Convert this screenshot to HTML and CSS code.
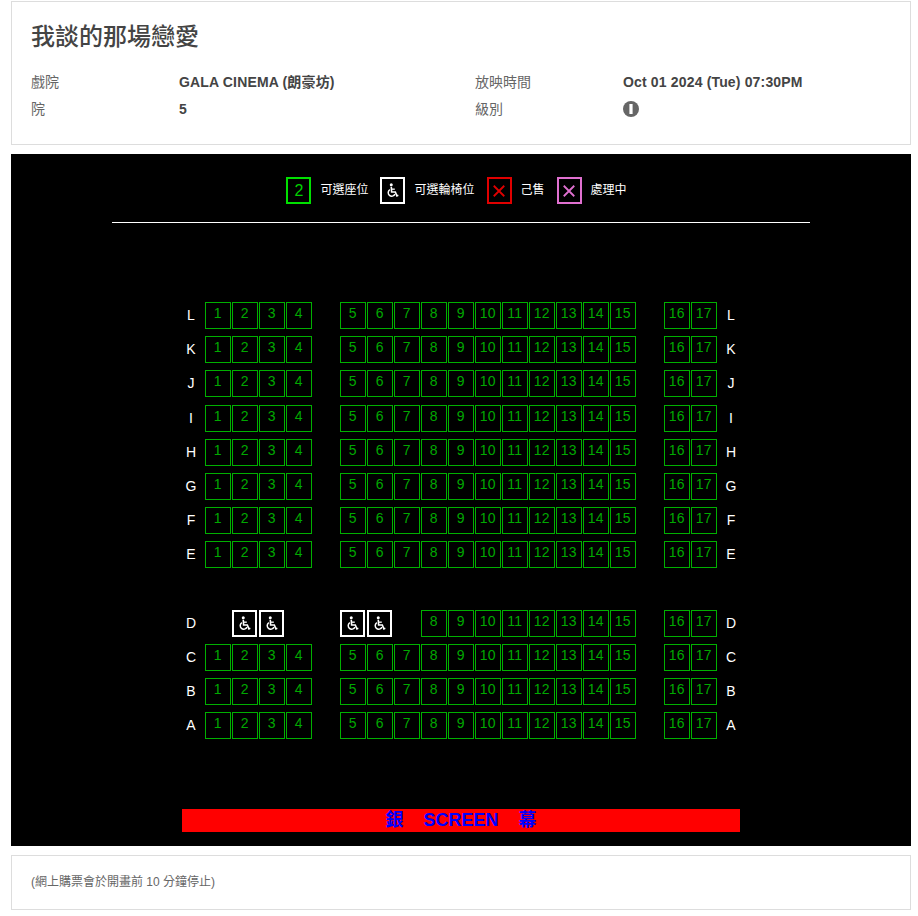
FILE: index.html
```html
<!DOCTYPE html>
<html lang="zh-Hant">
<head>
<meta charset="utf-8">
<title>我談的那場戀愛</title>
<link rel="stylesheet" href="styles.css">
</head>
<body>
<svg class="defs" width="0" height="0" aria-hidden="true"><symbol id="wc" viewBox="0 0 14 17"><circle cx="5.6" cy="1.9" r="1.7" fill="currentColor"/><path d="M5.6 4.2 6 10.2H10.2L12 14.6 13.6 14" fill="none" stroke="currentColor" stroke-width="1.8"/><path d="M6 7H9.6" fill="none" stroke="currentColor" stroke-width="1.5"/><path d="M4 7.6A4 4 0 1 0 9.8 12.6" fill="none" stroke="currentColor" stroke-width="1.7"/></symbol></svg>
<main class="page">
<section class="panel info">
<h1 class="title">我談的那場戀愛</h1>
<div class="facts">
<span class="key">戲院</span><b class="val">GALA CINEMA (朗豪坊)</b><span class="key">放映時間</span><b class="val">Oct 01 2024 (Tue) 07:30PM</b>
<span class="key">院</span><b class="val">5</b><span class="key">級別</span><span class="val"><svg class="rating" viewBox="0 0 16 16" role="img" aria-label="I"><circle cx="8" cy="8" r="8"/><rect x="6.4" y="3" width="3.2" height="10"/></svg></span>
</div>
</section>
<section class="hall">
<div class="legend">
<span class="lbox lgreen">2</span><span class="ltext">可選座位</span>
<span class="lbox lwhite"><svg class="wc"><use href="#wc"/></svg></span><span class="ltext">可選輪椅位</span>
<span class="lbox lred"><svg class="x" viewBox="0 0 16 16"><path d="M1 1 15 15M15 1 1 15"/></svg></span><span class="ltext">己售</span>
<span class="lbox lpink"><svg class="x" viewBox="0 0 16 16"><path d="M1 1 15 15M15 1 1 15"/></svg></span><span class="ltext">處理中</span>
</div>
<hr class="rule">
<div class="map">
<div class="row"><span class="rl">L</span><a>1</a><a>2</a><a>3</a><a>4</a><i></i><a>5</a><a>6</a><a>7</a><a>8</a><a>9</a><a>10</a><a>11</a><a>12</a><a>13</a><a>14</a><a>15</a><i></i><a>16</a><a>17</a><span class="rl">L</span></div>
<div class="row"><span class="rl">K</span><a>1</a><a>2</a><a>3</a><a>4</a><i></i><a>5</a><a>6</a><a>7</a><a>8</a><a>9</a><a>10</a><a>11</a><a>12</a><a>13</a><a>14</a><a>15</a><i></i><a>16</a><a>17</a><span class="rl">K</span></div>
<div class="row"><span class="rl">J</span><a>1</a><a>2</a><a>3</a><a>4</a><i></i><a>5</a><a>6</a><a>7</a><a>8</a><a>9</a><a>10</a><a>11</a><a>12</a><a>13</a><a>14</a><a>15</a><i></i><a>16</a><a>17</a><span class="rl">J</span></div>
<div class="row"><span class="rl">I</span><a>1</a><a>2</a><a>3</a><a>4</a><i></i><a>5</a><a>6</a><a>7</a><a>8</a><a>9</a><a>10</a><a>11</a><a>12</a><a>13</a><a>14</a><a>15</a><i></i><a>16</a><a>17</a><span class="rl">I</span></div>
<div class="row"><span class="rl">H</span><a>1</a><a>2</a><a>3</a><a>4</a><i></i><a>5</a><a>6</a><a>7</a><a>8</a><a>9</a><a>10</a><a>11</a><a>12</a><a>13</a><a>14</a><a>15</a><i></i><a>16</a><a>17</a><span class="rl">H</span></div>
<div class="row"><span class="rl">G</span><a>1</a><a>2</a><a>3</a><a>4</a><i></i><a>5</a><a>6</a><a>7</a><a>8</a><a>9</a><a>10</a><a>11</a><a>12</a><a>13</a><a>14</a><a>15</a><i></i><a>16</a><a>17</a><span class="rl">G</span></div>
<div class="row"><span class="rl">F</span><a>1</a><a>2</a><a>3</a><a>4</a><i></i><a>5</a><a>6</a><a>7</a><a>8</a><a>9</a><a>10</a><a>11</a><a>12</a><a>13</a><a>14</a><a>15</a><i></i><a>16</a><a>17</a><span class="rl">F</span></div>
<div class="row"><span class="rl">E</span><a>1</a><a>2</a><a>3</a><a>4</a><i></i><a>5</a><a>6</a><a>7</a><a>8</a><a>9</a><a>10</a><a>11</a><a>12</a><a>13</a><a>14</a><a>15</a><i></i><a>16</a><a>17</a><span class="rl">E</span></div>
<div class="row"></div>
<div class="row"><span class="rl">D</span><i></i><a class="wseat"><svg class="wc"><use href="#wc"/></svg></a><a class="wseat"><svg class="wc"><use href="#wc"/></svg></a><i></i><i></i><a class="wseat"><svg class="wc"><use href="#wc"/></svg></a><a class="wseat"><svg class="wc"><use href="#wc"/></svg></a><i></i><a>8</a><a>9</a><a>10</a><a>11</a><a>12</a><a>13</a><a>14</a><a>15</a><i></i><a>16</a><a>17</a><span class="rl">D</span></div>
<div class="row"><span class="rl">C</span><a>1</a><a>2</a><a>3</a><a>4</a><i></i><a>5</a><a>6</a><a>7</a><a>8</a><a>9</a><a>10</a><a>11</a><a>12</a><a>13</a><a>14</a><a>15</a><i></i><a>16</a><a>17</a><span class="rl">C</span></div>
<div class="row"><span class="rl">B</span><a>1</a><a>2</a><a>3</a><a>4</a><i></i><a>5</a><a>6</a><a>7</a><a>8</a><a>9</a><a>10</a><a>11</a><a>12</a><a>13</a><a>14</a><a>15</a><i></i><a>16</a><a>17</a><span class="rl">B</span></div>
<div class="row"><span class="rl">A</span><a>1</a><a>2</a><a>3</a><a>4</a><i></i><a>5</a><a>6</a><a>7</a><a>8</a><a>9</a><a>10</a><a>11</a><a>12</a><a>13</a><a>14</a><a>15</a><i></i><a>16</a><a>17</a><span class="rl">A</span></div>
</div>
<div class="screen">銀&nbsp;&nbsp;&nbsp;&nbsp;SCREEN&nbsp;&nbsp;&nbsp;&nbsp;幕</div>
</section>
<section class="panel note">(網上購票會於開畫前 10 分鐘停止)</section>
</main>
</body>
</html>
```
FILE: styles.css
```css
* { box-sizing: border-box; }
html, body { margin: 0; background: #fff; }
body { font-family: "Liberation Sans", "Noto Sans CJK TC", sans-serif; color: #555; }
.defs { display: block; height: 0; }
.page { width: 900px; margin: 1px 0 0 11px; display: flex; flex-direction: column; gap: 9px; }
.panel { border: 1px solid #ddd; background: #fff; padding-left: 19px; }
.info { height: 144px; padding-top: 18px; }
.title { margin: 0; font-size: 24px; line-height: 34px; font-weight: 500; color: #444; }
.facts { display: grid; grid-template-columns: 148px 296px 148px 1fr; grid-auto-rows: 27px; margin-top: 14px; align-items: center; font-size: 14px; line-height: 16px; }
.key { color: #666; height: 16px; }
.val { color: #444; font-weight: bold; display: flex; align-items: center; height: 16px; letter-spacing: 0.16px; }
.rating { width: 16px; height: 16px; fill: #666; }
.rating rect { fill: #fff; }
.hall { background: #000; height: 692px; padding-top: 23px; display: flex; flex-direction: column; align-items: center; }
.legend { display: flex; align-items: center; height: 27px; padding-right: 9px; }
.lbox { width: 25px; height: 27px; border: 2px solid; display: flex; align-items: center; justify-content: center; font-size: 16px; margin-right: 9px; }
.ltext { color: #fff; font-size: 12px; line-height: 16px; height: 16px; margin: -2px 12px 0 0; }
.ltext:last-child { margin-right: 0; }
.lgreen { border-color: #00e000; color: #00d000; }
.lwhite { border-color: #fff; color: #fff; }
.lred { border-color: #e00000; color: #e00000; }
.lpink { border-color: #e070d0; color: #e070d0; }
.x { width: 12px; height: 12px; fill: none; stroke: currentColor; stroke-width: 2.4; }
.wc { width: 13px; height: 15px; display: block; }
.rule { width: 698px; height: 1px; border: 0; background: #fff; margin: 18px 0 0; flex: none; }
.map { margin-top: 79px; width: 567px; }
.row { display: grid; grid-template-columns: repeat(21, 27px); height: 34.2px; align-items: start; }
.rl { color: #fff; font-size: 14px; line-height: 27px; text-align: center; }
.row a { width: 26px; height: 27px; border: 1px solid #00b000; color: #00a800; font-size: 14px; line-height: 20px; text-align: center; letter-spacing: 0.3px; padding-left: 0.5px; }
.row a.wseat { width: 25px; border: 2px solid #fff; color: #fff; display: flex; align-items: center; justify-content: center; padding-left: 0; }
.screen { width: 558px; height: 23px; margin-top: 62.2px; background: #f00; color: #00f; font-size: 18px; font-weight: bold; line-height: 22px; text-align: center; white-space: nowrap; }
.note { height: 55px; font-size: 12px; line-height: 16px; padding-top: 18px; color: #666; }
```
